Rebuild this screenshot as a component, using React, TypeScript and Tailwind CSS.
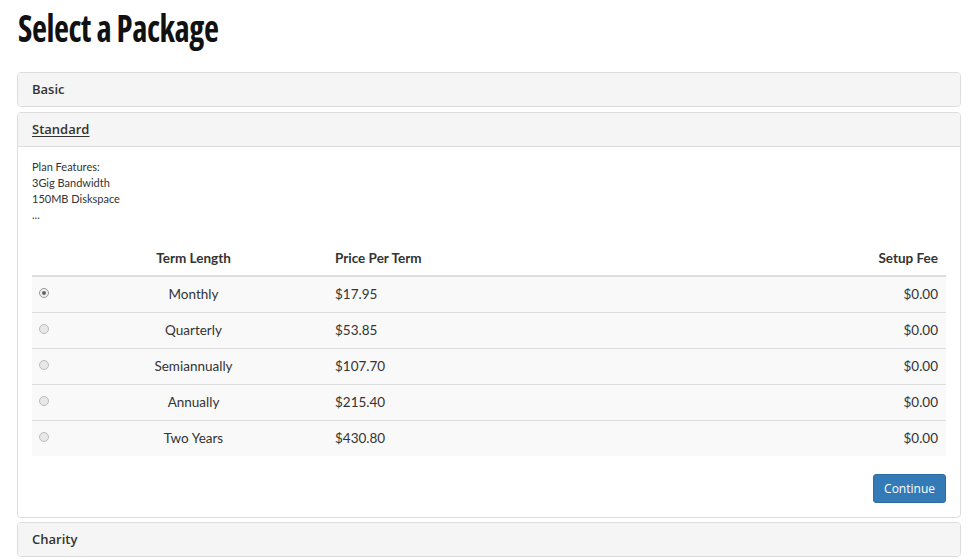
import React, { useState } from "react";

const terms = [
  { label: "Monthly", price: "$17.95", fee: "$0.00" },
  { label: "Quarterly", price: "$53.85", fee: "$0.00" },
  { label: "Semiannually", price: "$107.70", fee: "$0.00" },
  { label: "Annually", price: "$215.40", fee: "$0.00" },
  { label: "Two Years", price: "$430.80", fee: "$0.00" },
];

function PanelHeading({ title, underline }: { title: string; underline?: boolean }) {
  return (
    <div className="h-[33px] flex items-center px-[14px] bg-[#f5f5f5] text-[13px] font-semibold text-[#333] font-['Open_Sans',sans-serif]">
      <span className={underline ? "underline underline-offset-2" : ""}>{title}</span>
    </div>
  );
}

export default function App() {
  const [selected, setSelected] = useState(0);

  return (
    <div className="w-[972px] h-[559px] overflow-hidden bg-white text-[#333] font-['Lato','Open_Sans',sans-serif]">
      <h1 className="pl-[18px] pt-[6px] h-[72px] text-[37px] leading-[44px] font-bold text-[#111] font-['Open_Sans',sans-serif] font-stretch-condensed tracking-[-0.5px]">
        <span className="inline-block origin-left scale-x-[0.885]">Select a Package</span>
      </h1>

      <div className="ml-[17px] w-[944px] flex flex-col gap-[4px]">
        {/* Basic */}
        <div className="border border-[#ddd] rounded-[4px] overflow-hidden">
          <PanelHeading title="Basic" />
        </div>

        {/* Standard */}
        <div className="mt-[1px] border border-[#ddd] rounded-[4px] overflow-hidden">
          <div className="border-b border-[#ddd]">
            <PanelHeading title="Standard" underline />
          </div>
          <div className="px-[14px] pt-[12px] pb-[14px]">
            <div className="text-[11px] leading-[16px] text-[#333]">
              <div>Plan Features:</div>
              <div>3Gig Bandwidth</div>
              <div>150MB Diskspace</div>
              <div>...</div>
            </div>

            <table className="w-full mt-[17px] border-collapse text-[13.5px]">
              <thead>
                <tr className="h-[36px] border-b-2 border-[#ddd] text-[13.5px] font-bold text-[#333]">
                  <th className="w-[28px]"></th>
                  <th className="w-[267px] text-center font-bold pt-[2px]">Term Length</th>
                  <th className="text-left px-2 font-bold pt-[2px]">Price Per Term</th>
                  <th className="text-right px-2 font-bold pt-[2px]">Setup Fee</th>
                </tr>
              </thead>
              <tbody>
                {terms.map((t, i) => (
                  <tr
                    key={t.label}
                    className={`h-[36px] bg-[#f9f9f9] ${i > 0 ? "border-t border-[#ddd]" : ""}`}
                    onClick={() => setSelected(i)}
                  >
                    <td className="pl-[7px] align-middle">
                      <span
                        className={`-mt-[2px] flex w-[10px] h-[10px] rounded-full border items-center justify-center ${
                          selected === i ? "border-[#999] bg-[#f0f0f0]" : "border-[#bbb] bg-[#e8e8e8]"
                        }`}
                      >
                        {selected === i && <span className="w-[4px] h-[4px] rounded-full bg-[#666]" />}
                      </span>
                    </td>
                    <td className="text-center">{t.label}</td>
                    <td className="text-left px-2">{t.price}</td>
                    <td className="text-right px-2">{t.fee}</td>
                  </tr>
                ))}
              </tbody>
            </table>

            <div className="flex justify-end mt-[18px]">
              <button className="h-[29px] px-[10px] rounded-[3px] bg-[#337ab7] border border-[#2e6da4] text-white text-[12px] font-['Open_Sans',sans-serif]">
                Continue
              </button>
            </div>
          </div>
        </div>

        {/* Charity */}
        <div className="border border-[#ddd] rounded-[4px] overflow-hidden">
          <PanelHeading title="Charity" />
        </div>
      </div>
    </div>
  );
}
